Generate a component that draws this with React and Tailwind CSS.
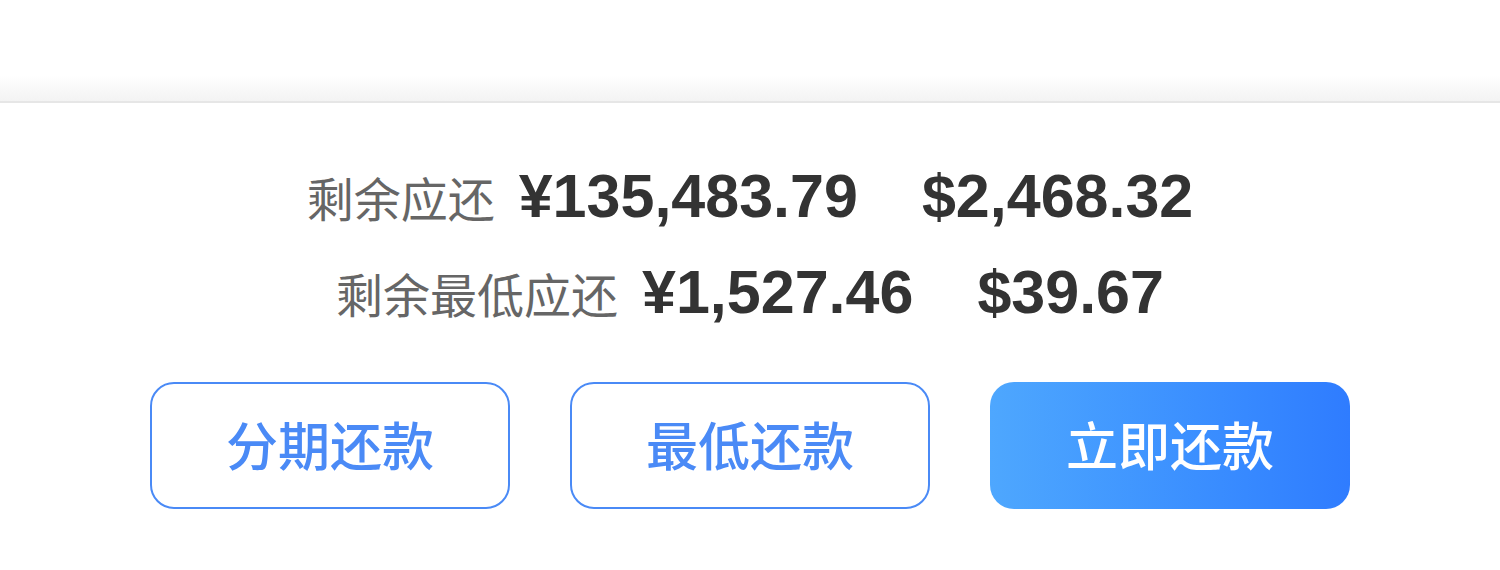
import React from 'react';

const cjk = { fontFamily: '"Noto Sans CJK SC", "Noto Sans", sans-serif' };
const num = { fontFamily: '"Liberation Sans", Arial, sans-serif' };

function AmountRow({ label, cny, usd }) {
    return (
        <div className="flex items-baseline justify-center h-[64px] leading-[64px]">
            <span className="text-[47px] text-[#666666]" style={cjk}>{label}</span>
            <span className="ml-[24px] text-[61px] font-bold text-[#333333]" style={num}>{cny}</span>
            <span className="ml-[64px] text-[61px] font-bold text-[#333333]" style={num}>{usd}</span>
        </div>
    );
}

export default function App() {
    return (
        <div className="w-[1500px] h-[570px] bg-white overflow-hidden">
            {/* top shadow */}
            <div className="h-[75px] bg-white" />
            <div className="h-[26px] bg-gradient-to-b from-white to-[#f3f3f3]" />
            <div className="h-[2px] bg-[#e6e6e6]" />

            <div className="pt-[61px]">
                <AmountRow label="剩余应还" cny="¥135,483.79" usd="$2,468.32" />
                <div className="h-[32px]" />
                <AmountRow label="剩余最低应还" cny="¥1,527.46" usd="$39.67" />

                <div className="flex justify-center gap-[60px] mt-[58px]" style={cjk}>
                    <button className="w-[360px] h-[127px] pb-[4px] rounded-[24px] border-2 border-[#4a8af6] bg-white text-[52px] font-medium text-[#4a8af6]">
                        分期还款
                    </button>
                    <button className="w-[360px] h-[127px] pb-[4px] rounded-[24px] border-2 border-[#4a8af6] bg-white text-[52px] font-medium text-[#4a8af6]">
                        最低还款
                    </button>
                    <button className="w-[360px] h-[127px] pb-[4px] rounded-[24px] bg-gradient-to-r from-[#4ea7fe] to-[#2f7cff] text-[52px] font-medium text-white">
                        立即还款
                    </button>
                </div>
            </div>
        </div>
    );
}
